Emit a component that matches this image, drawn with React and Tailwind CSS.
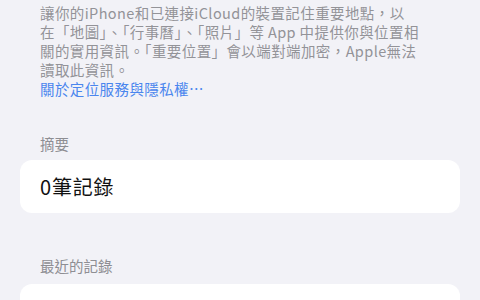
export default function App() {
  const font = { fontFamily: '"Noto Sans CJK TC", "Noto Sans", sans-serif' };
  return (
    <div className="w-[480px] h-[300px] overflow-hidden bg-[#f2f2f7]" style={font}>
      <div className="px-5 pt-[3px]">
        <div className="px-5 text-[14.5px] leading-[19px] tracking-[0.4px] text-[#939398]">
          <p>讓你的iPhone和已連接iCloud的裝置記住重要地點，以</p>
          <p>在「地圖」、「行事曆」、「照片」等 App 中提供你與位置相</p>
          <p>關的實用資訊。「重要位置」會以端對端加密，Apple無法</p>
          <p>讀取此資訊。</p>
          <p className="text-[#4a86ee]">關於定位服務與隱私權…</p>
        </div>
        <div className="px-5 mt-[36px] mb-[7px] text-[14.5px] leading-[19px] text-[#8e8e93]">摘要</div>
        <div className="h-[53px] rounded-[12px] bg-white px-5 flex items-center">
          <span className="text-[20px] tracking-[0.8px] text-[#111]">0筆記錄</span>
        </div>
        <div className="px-5 mt-[43px] mb-[9px] text-[14.5px] leading-[19px] text-[#8e8e93]">最近的記錄</div>
        <div className="h-[53px] rounded-[12px] bg-white" />
      </div>
    </div>
  );
}
